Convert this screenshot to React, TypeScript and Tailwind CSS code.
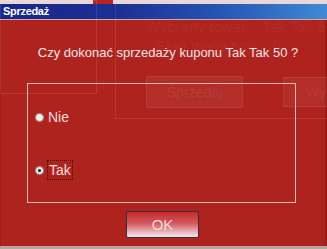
import React from "react";

export default function App() {
  return (
    <div
      className="relative w-[327px] h-[249px] overflow-hidden bg-[#b9a3a3] flex flex-col"
      style={{ fontFamily: '"Liberation Sans", Arial, sans-serif' }}
    >
      {/* top strip of window behind */}
      <div className="relative h-[4px] bg-[#e9d6d6] shrink-0 overflow-hidden">
        <div className="absolute left-[93px] top-0 w-[20px] h-[4px] bg-[#b8231f]" />
        <span className="absolute left-[114px] top-[-12px] text-[14px] leading-[14px] text-[#c0403c]">
          Potwierdzenie
        </span>
      </div>
      {/* title bar */}
      <div className="h-[15px] shrink-0 flex items-center pl-[3px] bg-[linear-gradient(90deg,#18268a_0%,#1c2f92_35%,#2452b0_65%,#3f8ad6_100%)]">
        <span className="text-white font-bold text-[11px] leading-none tracking-[-0.3px]">Sprzedaż</span>
      </div>
      <div className="h-[1px] shrink-0 bg-[#c9a9b3]" />
      {/* body */}
      <div className="relative flex-1 bg-[#af231e] border-l border-[#a01c18] border-r-2 border-r-[#9a1a17] flex flex-col items-center pt-[25px]">
        {/* ghost window behind (translucent) */}
        <div className="pointer-events-none absolute left-[-1px] top-[-20px] w-[97px] h-[94px] border border-[rgba(255,255,255,0.10)]" />
        <div className="pointer-events-none absolute left-[114px] top-[-20px] w-[240px] h-[119px] border border-[rgba(255,255,255,0.09)]" />
        <div className="pointer-events-none absolute left-[145px] top-[-1px] text-[15px] leading-[15px] whitespace-nowrap text-[rgba(255,255,255,0.06)]">
          Wybrany towar:&nbsp;&nbsp;&nbsp;Tak Tak 50
        </div>
        <div className="pointer-events-none absolute left-[155px] top-[18px] text-[15px] leading-[15px] whitespace-nowrap text-[rgba(255,255,255,0.06)]">
          Stan magazynu:&nbsp;&nbsp;0
        </div>
        <div className="pointer-events-none absolute left-[145px] top-[56px] w-[97px] h-[32px] rounded-[2px] bg-[rgba(255,255,255,0.05)] border border-[rgba(255,255,255,0.07)] flex items-center justify-center text-[14px] text-[rgba(255,255,255,0.07)]">
          Sprzedaj
        </div>
        <div className="pointer-events-none absolute left-[282px] top-[57px] w-[80px] h-[30px] rounded-[2px] bg-[rgba(255,255,255,0.05)] border border-[rgba(255,255,255,0.07)] flex items-center pl-[22px] text-[14px] text-[rgba(255,255,255,0.07)]">
          Wydaj
        </div>

        <p className="relative ml-[10px] text-[13px] leading-[16px] text-[#f3e6e6] whitespace-nowrap">
          Czy dokonać sprzedaży kuponu Tak Tak 50 ?
        </p>

        <div className="relative self-start ml-[26px] mt-[22px] w-[269px] h-[120px] border border-[#e6b9b9] flex flex-col pl-[7px] pt-[25px]">
          <label className="flex items-center gap-[4px] h-[16px]">
            <span className="w-[9px] h-[9px] rounded-full bg-[#f2eeee] border border-[#9a8a8a]" />
            <span className="text-[14px] leading-[16px] text-[#ffdcdc]">Nie</span>
          </label>
          <label className="flex items-center gap-[3px] h-[20px] mt-[35px]">
            <span className="w-[9px] h-[9px] rounded-full bg-[#f2eeee] border border-[#9a8a8a] flex items-center justify-center">
              <span className="w-[3px] h-[3px] rounded-full bg-black" />
            </span>
            <span className="text-[14px] leading-[16px] text-[#ffdcdc] border border-dotted border-[#3a1414] px-[1px] py-[1px]">
              Tak
            </span>
          </label>
        </div>

        <button className="relative mt-[8px] ml-[-1px] w-[73px] h-[27px] rounded-[2px] border border-[#3b2a44] bg-[linear-gradient(180deg,#c42a2a_0%,#d25a5e_45%,#e9c2c8_85%,#f3e4ea_100%)] text-[15px] leading-none text-[#f6dada]">
          OK
        </button>
      </div>
      <div className="h-[3px] shrink-0 bg-[#b9a3a3]" />
    </div>
  );
}
